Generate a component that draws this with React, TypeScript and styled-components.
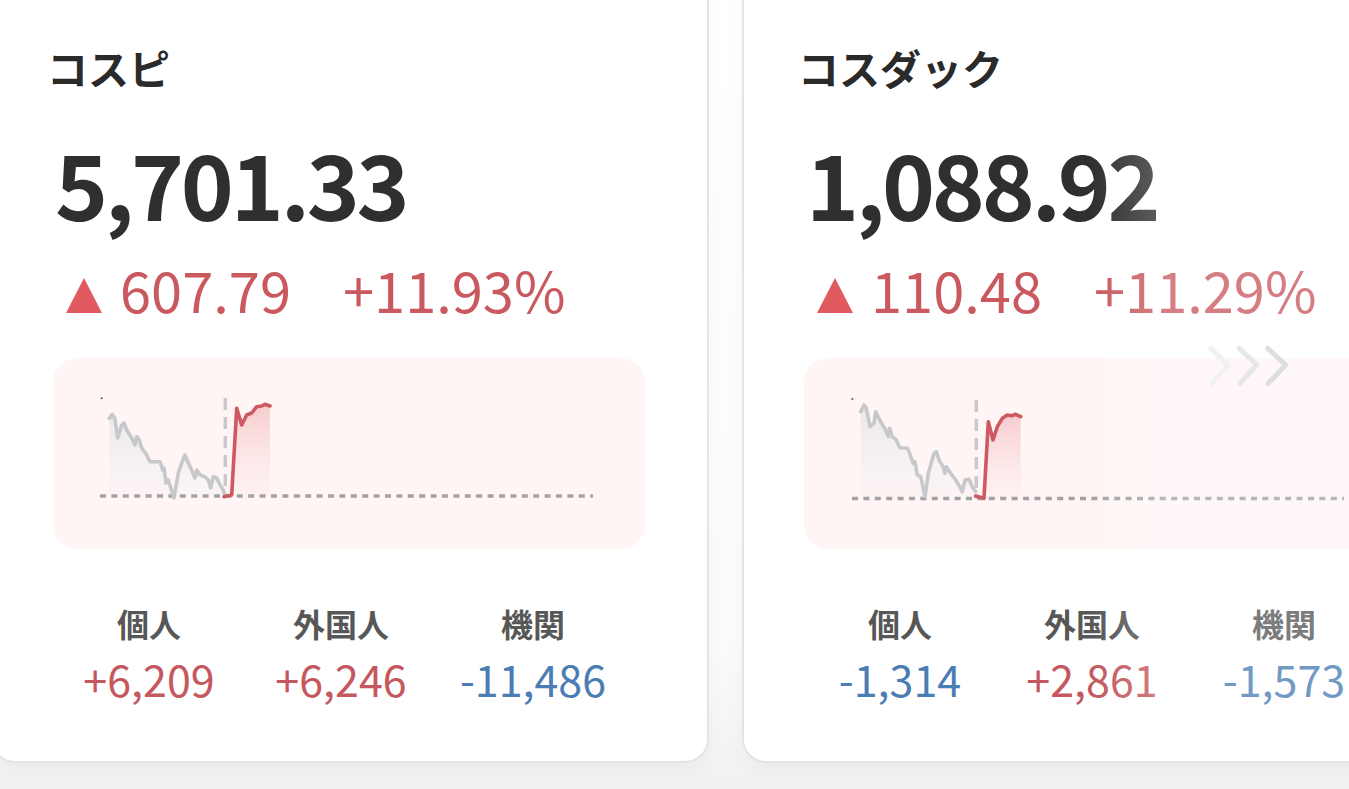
import React from "react";
import styled, { createGlobalStyle } from "styled-components";

const GlobalStyle = createGlobalStyle`
  html, body { margin: 0; padding: 0; }
  body {
    min-height: 100vh;
    overflow: hidden;
    background: linear-gradient(180deg, #ffffff 0px, #fbfbfb 640px, #f1f1f2 789px);
    font-family: "Noto Sans CJK JP", "Noto Sans", sans-serif;
  }
`;

const Page = styled.div`
  width: 1349px;
  height: 789px;
  overflow: hidden;
`;

const CardRow = styled.div`
  display: flex;
  gap: 33px;
  margin-left: -9px;
  margin-top: -30px;
`;

const Card = styled.section`
  position: relative;
  flex: 0 0 718px;
  box-sizing: border-box;
  background: #ffffff;
  border: 2px solid #e1e5ea;
  border-radius: 24px;
  padding: 75px 60px 61px;
  box-shadow: 0 10px 20px rgba(0, 0, 0, 0.03);
  display: flex;
  flex-direction: column;
`;

const Title = styled.h2`
  margin: 0 0 0 -6px;
  font-size: 41px;
  line-height: 41px;
  font-weight: 700;
  color: #2a2a2a;
`;

const Price = styled.div`
  margin: 49px 0 0 2px;
  font-size: 90px;
  line-height: 90px;
  font-weight: 700;
  letter-spacing: -3.2px;
  color: #2e2f31;
`;

const ChangeRow = styled.div`
  margin-top: 34px;
  padding-left: 13px;
  display: flex;
  align-items: flex-start;
  height: 56px;
  font-size: 56px;
  line-height: 56px;
  font-weight: 400;
  color: #c9595f;
`;

const UpTriangle = styled.svg`
  margin-top: 17px;
  flex: none;
`;

const ChangeValue = styled.span`
  margin-left: 18px;
`;

const ChangePercent = styled.span`
  margin-left: 52px;
`;

const ChartPanel = styled.div`
  margin-top: 41px;
  width: 592px;
  height: 191px;
  border-radius: 24px;
  background: #fff5f5;
  overflow: hidden;
  flex: none;
`;

const InvestorGrid = styled.div`
  margin-top: 58px;
  display: grid;
  grid-template-columns: repeat(3, 192px);
  text-align: center;
`;

const InvestorCell = styled.div`
  display: flex;
  flex-direction: column;
  align-items: center;
`;

const InvestorLabel = styled.div`
  font-size: 32px;
  line-height: 32px;
  font-weight: 700;
  color: #575757;
`;

const InvestorValue = styled.div<{ $up: boolean }>`
  margin-top: 18px;
  font-size: 43px;
  line-height: 43px;
  font-weight: 400;
  color: ${(p) => (p.$up ? "#c4585e" : "#4a7db3")};
`;

const SwipeHint = styled.svg`
  position: absolute;
  left: 464px;
  top: 374px;
  overflow: visible;
`;

const EdgeFade = styled.div`
  position: absolute;
  top: 0;
  bottom: 0;
  left: 346px;
  right: 0;
  pointer-events: none;
  background: linear-gradient(90deg, rgba(255, 255, 255, 0) 0px, rgba(255, 255, 255, 0.22) 70px);
  border-radius: 0 24px 24px 0;
`;

type Pt = [number, number];

type ChartData = {
  dot: Pt;
  baseY: number;
  baseX0: number;
  baseX1: number;
  splitX: number;
  splitTop: number;
  gray: Pt[];
  red: Pt[];
};

const toPath = (pts: Pt[]) =>
  pts.map((p, i) => `${i === 0 ? "M" : "L"}${p[0]} ${p[1]}`).join(" ");

const toArea = (pts: Pt[], baseY: number) =>
  `${toPath(pts)} L${pts[pts.length - 1][0]} ${baseY} L${pts[0][0]} ${baseY} Z`;

const IntradayChart: React.FC<{ data: ChartData; id: string }> = ({ data, id }) => (
  <svg width="592" height="191" viewBox="0 0 592 191">
    <defs>
      <linearGradient id={`g-${id}`} x1="0" y1="0" x2="0" y2="1">
        <stop offset="0" stopColor="#e4e4e6" stopOpacity="0.75" />
        <stop offset="1" stopColor="#eeeeee" stopOpacity="0.15" />
      </linearGradient>
      <linearGradient id={`r-${id}`} x1="0" y1="0" x2="0" y2="1">
        <stop offset="0" stopColor="#f2a9ad" stopOpacity="0.55" />
        <stop offset="1" stopColor="#fbe3e4" stopOpacity="0.2" />
      </linearGradient>
    </defs>
    <path d={toArea(data.gray, data.baseY)} fill={`url(#g-${id})`} />
    <path d={toArea(data.red.slice(1), data.baseY)} fill={`url(#r-${id})`} />
    <line
      x1={data.baseX0}
      y1={data.baseY}
      x2={data.baseX1}
      y2={data.baseY}
      stroke="#a2a2a4"
      strokeWidth="3.5"
      strokeDasharray="6 5.4"
    />
    <line
      x1={data.splitX}
      y1={data.splitTop}
      x2={data.splitX}
      y2={data.baseY}
      stroke="#c9c9cb"
      strokeWidth="3.5"
      strokeDasharray="12 7"
    />
    <circle cx={data.dot[0]} cy={data.dot[1]} r="1" fill="#555" />
    <path
      d={toPath(data.gray)}
      fill="none"
      stroke="#c6c8cb"
      strokeWidth="3.6"
      strokeLinejoin="round"
      strokeLinecap="round"
    />
    <path
      d={toPath(data.red)}
      fill="none"
      stroke="#cc5a60"
      strokeWidth="3.6"
      strokeLinejoin="round"
      strokeLinecap="round"
    />
  </svg>
);

type Investor = { label: string; value: string; up: boolean };

type IndexInfo = {
  id: string;
  name: string;
  price: string;
  change: string;
  percent: string;
  chart: ChartData;
  investors: Investor[];
  hint?: boolean;
};

const kospiChart: ChartData = {
  dot: [48.7, 40.3],
  baseY: 138,
  baseX0: 47,
  baseX1: 540,
  splitX: 172.3,
  splitTop: 40,
  gray: [
    [56.3, 60.3], [59.3, 56.3], [62, 61], [64.7, 80], [68.7, 67], [71, 65], [73.7, 72],
    [78.7, 80], [82, 87], [83.7, 78.7], [86.3, 82], [88.7, 90], [93.7, 97], [97, 103.7],
    [107, 103.7], [109.7, 112], [111, 110], [113, 125], [115.3, 122], [121, 140],
    [125.3, 115], [128.7, 105], [132, 97], [135.3, 105], [138.7, 112], [142, 120],
    [143.7, 112], [147, 117], [152, 118.7], [155.3, 122], [157.7, 130], [160.3, 118.7],
    [163.7, 120], [167, 127], [170.3, 132], [172, 138],
  ],
  red: [
    [171, 138.7], [178.7, 137], [183.7, 50.3], [188.7, 67], [193.7, 57], [198.7, 55],
    [203.7, 48.7], [208.7, 48], [212, 46.3], [217, 48],
  ],
};

const kosdaqChart: ChartData = {
  dot: [48.3, 41],
  baseY: 140.5,
  baseX0: 48,
  baseX1: 540,
  splitX: 172.3,
  splitTop: 42,
  gray: [
    [56.7, 53.7], [60, 47], [62.3, 50.3], [66, 68.7], [70, 65.3], [71.7, 53.7], [76.7, 63.7],
    [81.7, 72], [84.3, 78.7], [85.7, 70.3], [88.3, 78.7], [92.3, 82], [95.7, 89.7],
    [103.3, 90.3], [105.7, 95.3], [109, 105.3], [111, 103.7], [113.3, 117], [116.7, 118.7],
    [121, 138.7], [124.3, 115.3], [126.7, 107], [130, 95.3], [132.3, 93.7], [135.7, 103.7],
    [138.3, 107], [141, 115.3], [142.3, 108.7], [146.7, 115.3], [151.7, 122], [155.7, 128.7],
    [158.3, 133.7], [161, 122], [165, 121.3], [168.3, 128.7], [171.7, 133.7],
  ],
  red: [
    [171.7, 138], [180, 140.3], [184.3, 63.7], [189, 82], [193.3, 68.7], [198.3, 60.3],
    [203.3, 57], [207.7, 57.7], [211.7, 56.3], [216.7, 58.7],
  ],
};

const indices: IndexInfo[] = [
  {
    id: "kospi",
    name: "コスピ",
    price: "5,701.33",
    change: "607.79",
    percent: "+11.93%",
    chart: kospiChart,
    investors: [
      { label: "個人", value: "+6,209", up: true },
      { label: "外国人", value: "+6,246", up: true },
      { label: "機関", value: "-11,486", up: false },
    ],
  },
  {
    id: "kosdaq",
    name: "コスダック",
    price: "1,088.92",
    change: "110.48",
    percent: "+11.29%",
    chart: kosdaqChart,
    hint: true,
    investors: [
      { label: "個人", value: "-1,314", up: false },
      { label: "外国人", value: "+2,861", up: true },
      { label: "機関", value: "-1,573", up: false },
    ],
  },
];

const Chevrons: React.FC = () => (
  <SwipeHint width="80" height="40" viewBox="0 0 80 40">
    <polyline points="2.7,2.3 20.3,19 3.7,37.3" fill="none" stroke="#f1f1f1" strokeWidth="5" strokeLinecap="round" strokeLinejoin="round" />
    <polyline points="31.3,2.3 48.7,19 32,37.3" fill="none" stroke="#e7e7e7" strokeWidth="5" strokeLinecap="round" strokeLinejoin="round" />
    <polyline points="59.7,2.3 77.7,19 60.3,37.3" fill="none" stroke="#dddddd" strokeWidth="5" strokeLinecap="round" strokeLinejoin="round" />
  </SwipeHint>
);

const IndexCard: React.FC<{ info: IndexInfo }> = ({ info }) => (
  <Card>
    <Title>{info.name}</Title>
    <Price>{info.price}</Price>
    <ChangeRow>
      <UpTriangle width="36" height="35" viewBox="0 0 36 35">
        <polygon points="18,0 36,35 0,35" fill="#e05a5f" />
      </UpTriangle>
      <ChangeValue>{info.change}</ChangeValue>
      <ChangePercent>{info.percent}</ChangePercent>
    </ChangeRow>
    <ChartPanel>
      <IntradayChart data={info.chart} id={info.id} />
    </ChartPanel>
    <InvestorGrid>
      {info.investors.map((inv) => (
        <InvestorCell key={inv.label}>
          <InvestorLabel>{inv.label}</InvestorLabel>
          <InvestorValue $up={inv.up}>{inv.value}</InvestorValue>
        </InvestorCell>
      ))}
    </InvestorGrid>
    {info.hint && (
      <>
        <EdgeFade />
        <Chevrons />
      </>
    )}
  </Card>
);

export default function App() {
  return (
    <Page>
      <GlobalStyle />
      <CardRow>
        {indices.map((info) => (
          <IndexCard key={info.id} info={info} />
        ))}
      </CardRow>
    </Page>
  );
}
